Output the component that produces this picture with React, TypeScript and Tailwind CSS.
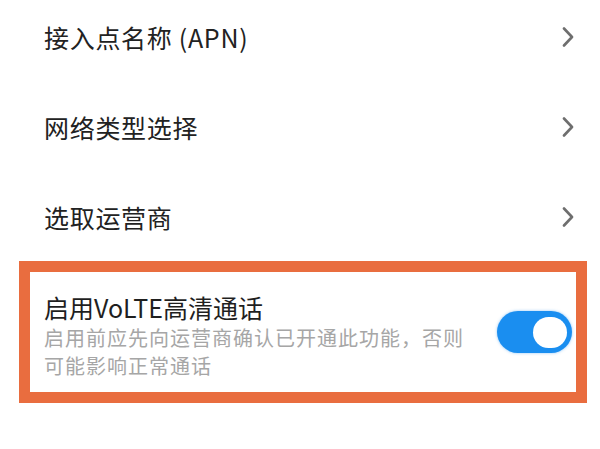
const ROWS = ['接入点名称 (APN)', '网络类型选择', '选取运营商'];

function Chevron() {
  return (
    <svg width="12" height="20" viewBox="0 0 12 20" fill="none" className="text-[#6e6e6e]">
      <path d="M2 1.5 L10 10 L2 18.5" stroke="currentColor" strokeWidth="2.6" strokeLinecap="round" strokeLinejoin="round" />
    </svg>
  );
}

export default function App() {
  return (
    <div
      className="h-[449px] w-[600px] overflow-hidden bg-white"
      style={{ fontFamily: '"Noto Sans CJK SC", "Noto Sans", sans-serif' }}
    >
      <div className="-mt-[8px]">
        {ROWS.map((label) => (
          <div key={label} className="flex h-[90px] items-center justify-between pl-[44px] pr-[26px]">
            <span className="text-[25px] leading-none tracking-[0.7px] text-[#222]">{label}</span>
            <Chevron />
          </div>
        ))}
      </div>

      <div className="mx-[19px] -mt-[1px] flex h-[142px] w-[568px] items-center justify-between border-[11px] border-[#e96d3f] pl-[14px] pr-[4px]">
        <div className="w-[430px] self-start pt-[18px]">
          <div className="text-[25px] leading-[34px] text-[#1f1f1f]">启用VoLTE高清通话</div>
          <div className="text-[20px] leading-[28px] tracking-[1px] text-[#a6a6a6]">
            启用前应先向运营商确认已开通此功能，否则可能影响正常通话
          </div>
        </div>
        <div className="flex h-[42px] w-[75px] items-center justify-end rounded-full bg-[#1a8ef0] pr-[5px] shadow-[0_0_3px_rgba(30,140,240,0.5)]">
          <div className="h-[31px] w-[34px] rounded-full bg-white" />
        </div>
      </div>
    </div>
  );
}
